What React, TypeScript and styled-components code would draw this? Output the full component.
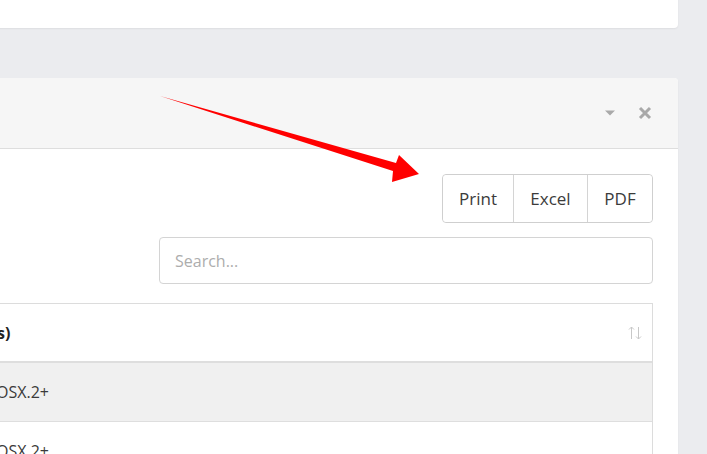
import styled, { createGlobalStyle } from 'styled-components';

const GlobalStyle = createGlobalStyle`
  html, body {
    margin: 0;
    padding: 0;
    background: #ebecef;
    font-family: "Open Sans", "Noto Sans", Arial, sans-serif;
  }
`;

const Page = styled.div`
  position: relative;
  width: 707px;
  height: 454px;
  overflow: hidden;
  background: #ebecef;
`;

const Column = styled.div`
  display: flex;
  flex-direction: column;
  gap: 50px;
  margin-left: -40px;
  width: 718px;
  margin-top: -60px;
`;

const Card = styled.div<{ $height?: number }>`
  background: #ffffff;
  border-radius: 4px;
  box-shadow: 0 1px 2px rgba(0, 0, 0, 0.06);
  ${(p) => (p.$height ? `height: ${p.$height}px;` : '')}
`;

const CardHeader = styled.div`
  height: 70px;
  background: #f6f6f6;
  border-bottom: 1px solid #dedede;
  border-radius: 4px 4px 0 0;
  display: flex;
  align-items: center;
  justify-content: flex-end;
  gap: 22px;
  padding-right: 26px;
`;

const ToolIcon = styled.span`
  display: flex;
  align-items: center;
  color: #a9a9a9;
`;

const CardBody = styled.div`
  padding: 25px 25px 0 0;
  display: flex;
  flex-direction: column;
  align-items: flex-end;
`;

const ButtonGroup = styled.div`
  display: flex;
  border: 1px solid #cfcfcf;
  border-radius: 4px;
  height: 47px;
`;

const GroupButton = styled.button<{ $w: number }>`
  width: ${(p) => p.$w}px;
  background: #fff;
  border: none;
  border-left: 1px solid #d4d4d4;
  font-family: "Open Sans", Arial, sans-serif;
  font-size: 17px;
  color: #3b3b3b;
  padding: 0;
  &:first-child {
    border-left: none;
    border-radius: 4px 0 0 4px;
  }
  &:last-child {
    border-radius: 0 4px 4px 0;
  }
`;

const SearchInput = styled.input`
  margin-top: 14px;
  width: 494px;
  height: 47px;
  box-sizing: border-box;
  border: 1px solid #d4d4d4;
  border-radius: 4px;
  padding: 0 15px;
  font-family: "Open Sans", Arial, sans-serif;
  font-size: 16px;
  color: #333;
  &::placeholder {
    color: #adadad;
  }
`;

const Table = styled.div`
  margin-top: 19px;
  align-self: stretch;
  border: 1px solid #dcdcdc;
  border-bottom: none;
`;

const HeadRow = styled.div`
  height: 57px;
  display: flex;
  align-items: center;
  justify-content: space-between;
  padding: 0 9px 0 0;
  border-bottom: 2px solid #dedede;
`;

const HeadLabel = styled.span`
  font-weight: 700;
  font-size: 16px;
  color: #222;
  margin-left: -40px;
`;

const Row = styled.div<{ $striped?: boolean }>`
  height: 58px;
  display: flex;
  align-items: center;
  background: ${(p) => (p.$striped ? '#f0f0f0' : '#ffffff')};
  border-bottom: 1px solid #dedede;
`;

const Cell = styled.span`
  font-size: 16px;
  color: #3a3a3a;
  margin-left: 35px;
`;

const Overlay = styled.svg`
  position: absolute;
  left: 0;
  top: 0;
  pointer-events: none;
`;

function SortIcon() {
  return (
    <svg width="16" height="16" viewBox="0 0 16 16">
      <g stroke="#c8c8c8" strokeWidth="1" fill="none">
        <path d="M4.5 14V2M2 4.5L4.5 2L7 4.5" />
        <path d="M11.5 2v12M9 11.5l2.5 2.5l2.5-2.5" />
      </g>
    </svg>
  );
}

export default function App() {
  return (
    <>
      <GlobalStyle />
      <Page>
        <Column>
          <Card $height={88} />
          <Card>
            <CardHeader>
              <ToolIcon>
                <svg width="12" height="8" viewBox="0 0 12 8">
                  <path d="M1 1.5h10L6 6.5z" fill="#a9a9a9" />
                </svg>
              </ToolIcon>
              <ToolIcon>
                <svg width="14" height="14" viewBox="0 0 14 14">
                  <path d="M2 2L12 12M12 2L2 12" stroke="#a9a9a9" strokeWidth="3" />
                </svg>
              </ToolIcon>
            </CardHeader>
            <CardBody>
              <ButtonGroup>
                <GroupButton $w={70}>Print</GroupButton>
                <GroupButton $w={74}>Excel</GroupButton>
                <GroupButton $w={65}>PDF</GroupButton>
              </ButtonGroup>
              <SearchInput placeholder="Search..." />
              <Table>
                <HeadRow>
                  <HeadLabel>Platform(s)</HeadLabel>
                  <SortIcon />
                </HeadRow>
                <Row $striped>
                  <Cell>OSX.2+</Cell>
                </Row>
                <Row>
                  <Cell>OSX.2+</Cell>
                </Row>
              </Table>
            </CardBody>
          </Card>
        </Column>
        <Overlay width="707" height="454">
          <polygon
            points="160,96 396,163 399,155 419,174 392,182 393,171"
            fill="#ff0000"
          />
        </Overlay>
      </Page>
    </>
  );
}
